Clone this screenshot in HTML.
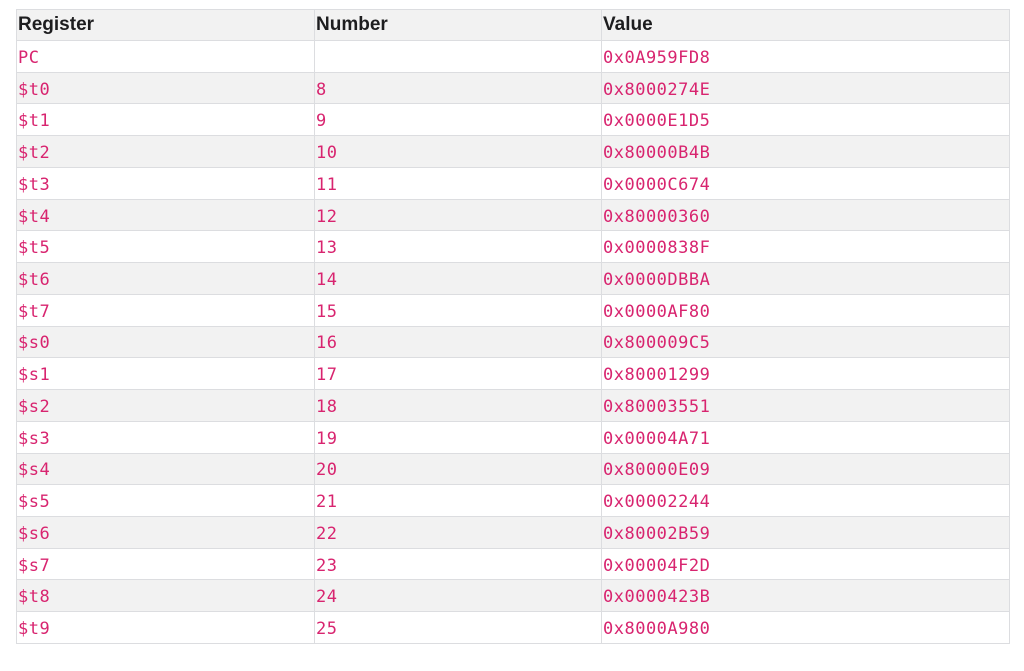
<!DOCTYPE html>
<html><head><meta charset="utf-8"><style>
body{margin:0;background:#fff;width:1024px;height:671px;overflow:hidden}
table{position:absolute;left:16px;top:9px;width:994px;height:635px;border-collapse:collapse;table-layout:fixed}
td,th{border:1px solid #dcdde0;padding:0 0 0 1px;text-align:left;vertical-align:middle;white-space:nowrap}
th{font:bold 19px "Liberation Sans",sans-serif;color:#1d1d1f;background:#f2f2f2;height:30px;line-height:20px;letter-spacing:0px}
td{font:17px "DejaVu Sans Mono","Liberation Mono",monospace;letter-spacing:0.5px;color:#d8246f;height:30.68px;padding-top:3px;box-sizing:border-box}
tbody tr:nth-child(odd) td{background:#fff}
tbody tr:nth-child(even) td{background:#f2f2f2}
</style></head><body>
<table>
<colgroup><col style="width:298px"><col style="width:287px"><col></colgroup>
<thead><tr><th>Register</th><th>Number</th><th>Value</th></tr></thead>
<tbody>
<tr><td>PC</td><td></td><td>0x0A959FD8</td></tr>
<tr><td>$t0</td><td>8</td><td>0x8000274E</td></tr>
<tr><td>$t1</td><td>9</td><td>0x0000E1D5</td></tr>
<tr><td>$t2</td><td>10</td><td>0x80000B4B</td></tr>
<tr><td>$t3</td><td>11</td><td>0x0000C674</td></tr>
<tr><td>$t4</td><td>12</td><td>0x80000360</td></tr>
<tr><td>$t5</td><td>13</td><td>0x0000838F</td></tr>
<tr><td>$t6</td><td>14</td><td>0x0000DBBA</td></tr>
<tr><td>$t7</td><td>15</td><td>0x0000AF80</td></tr>
<tr><td>$s0</td><td>16</td><td>0x800009C5</td></tr>
<tr><td>$s1</td><td>17</td><td>0x80001299</td></tr>
<tr><td>$s2</td><td>18</td><td>0x80003551</td></tr>
<tr><td>$s3</td><td>19</td><td>0x00004A71</td></tr>
<tr><td>$s4</td><td>20</td><td>0x80000E09</td></tr>
<tr><td>$s5</td><td>21</td><td>0x00002244</td></tr>
<tr><td>$s6</td><td>22</td><td>0x80002B59</td></tr>
<tr><td>$s7</td><td>23</td><td>0x00004F2D</td></tr>
<tr><td>$t8</td><td>24</td><td>0x0000423B</td></tr>
<tr><td>$t9</td><td>25</td><td>0x8000A980</td></tr>
</tbody></table>
</body></html>
